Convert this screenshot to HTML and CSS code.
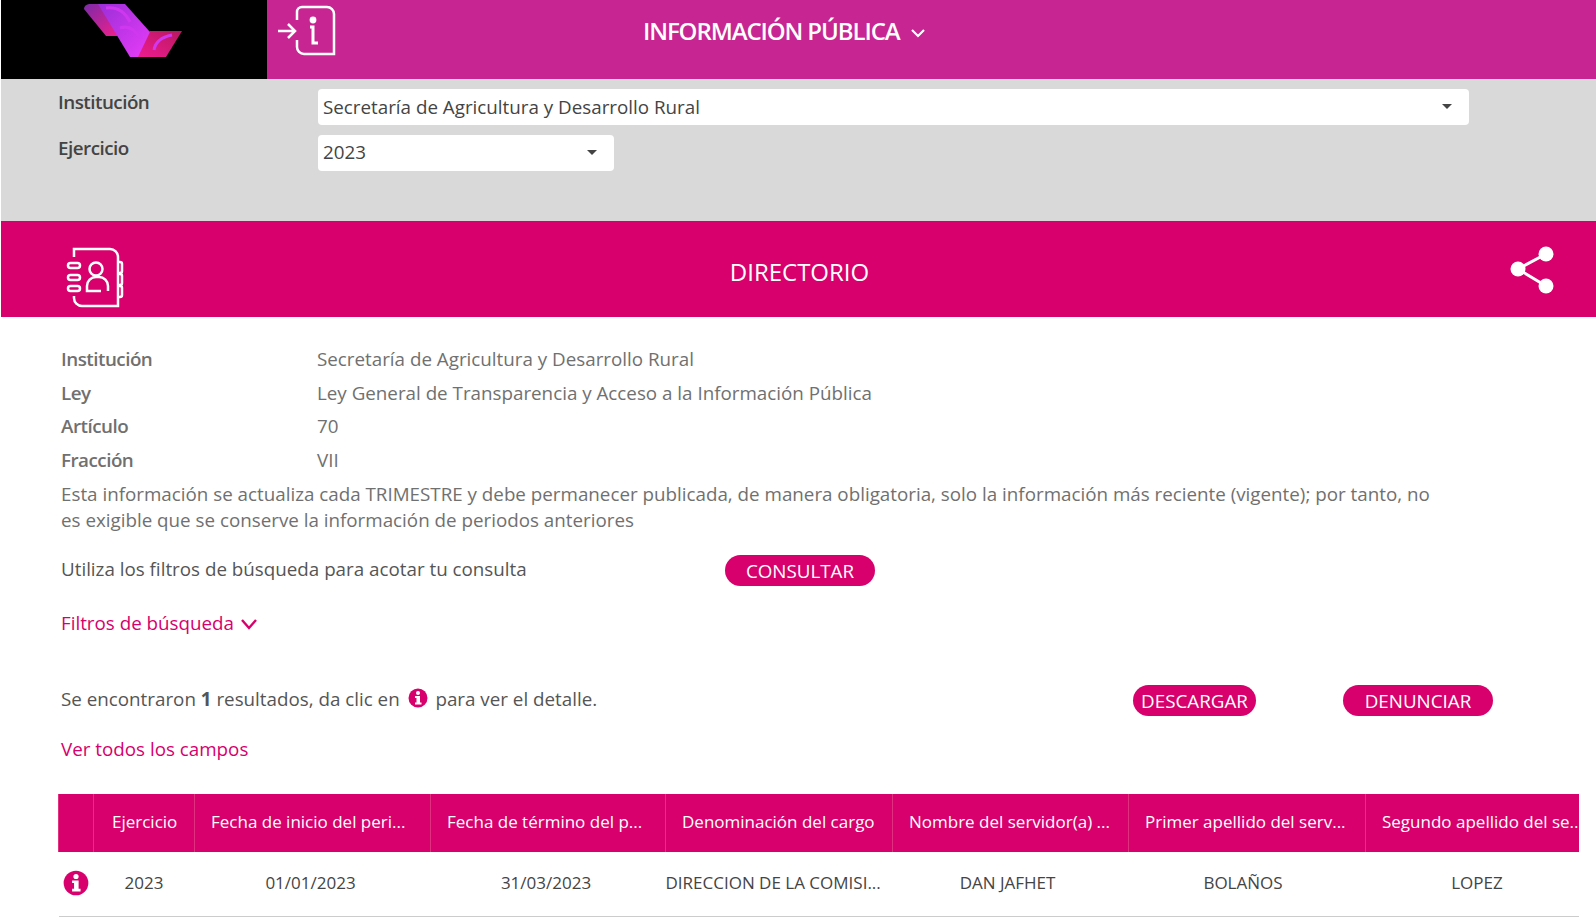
FILE: index.html
```html
<!DOCTYPE html>
<html lang="es">
<head>
  <meta charset="UTF-8" />
  <title>Directorio</title>
  <link rel="stylesheet" href="styles.css">
</head>
<body>
  <!-- Top bar -->
  <header class="top-bar">
    <div class="logo-box">
      <svg width="100" height="60" viewBox="0 0 100 60">
        <defs>
          <linearGradient id="foldGrad" x1="0" y1="0" x2="1" y2="1">
            <stop offset="0" stop-color="#7a2aa8"/>
            <stop offset="1" stop-color="#f0208c"/>
          </linearGradient>
          <linearGradient id="bandGrad" x1="0" y1="0" x2="1" y2="1">
            <stop offset="0" stop-color="#9a2ed8"/>
            <stop offset="1" stop-color="#e83cf8"/>
          </linearGradient>
          <linearGradient id="wingGrad" x1="0" y1="1" x2="1" y2="0">
            <stop offset="0" stop-color="#f01c90"/>
            <stop offset="1" stop-color="#b81860"/>
          </linearGradient>
        </defs>
        <path d="M0 9 Q0 5 5 4 L16 4 L34 36 L22 36 Z" fill="url(#foldGrad)"/>
        <path d="M66 31 L98 31 L82 57 L52 57 Z" fill="url(#wingGrad)"/>
        <path d="M14 4 L41 4 L66 32 L54 57 L46 57 Z" fill="url(#bandGrad)"/>
        <path d="M22 8 Q38 6 46 22 M36 28 Q48 24 56 38 M70 50 Q72 38 88 35" fill="none" stroke="#d038f0" stroke-width="3"/>
      </svg>
    </div>
    <div class="top-main">
      <svg class="info-icon" width="60" height="54" viewBox="0 0 60 54" fill="none" stroke="#fff" stroke-width="2.5">
        <path d="M20 15 V7 a5 5 0 0 1 5-5 H50 a7 7 0 0 1 7 7 V49 H27 a7 7 0 0 1-7-7 V35"/>
        <path d="M1 26 H18 M11 19 L18 26 L11 33"/>
        <circle cx="36" cy="15" r="3.4" fill="#fff" stroke="none"/>
        <path d="M33 22 H36 V38 H41" stroke-width="3"/>
      </svg>
      <div class="top-title">INFORMACIÓN PÚBLICA
        <svg width="16" height="10" viewBox="0 0 16 10" fill="none" stroke="#fff" stroke-width="2.2"><path d="M2 2 L8 8 L14 2"/></svg>
      </div>
    </div>
  </header>

  <!-- Selects -->
  <section class="filters">
    <div class="filter-row">
      <label>Institución</label>
      <div class="select select-wide">Secretaría de Agricultura y Desarrollo Rural<span class="caret"></span></div>
    </div>
    <div class="filter-row">
      <label>Ejercicio</label>
      <div class="select select-small">2023<span class="caret"></span></div>
    </div>
  </section>

  <!-- Section banner -->
  <section class="banner">
    <svg class="dir-icon" width="60" height="62" viewBox="0 0 60 62" fill="none" stroke="#fff" stroke-width="2.5">
      <path d="M8 10 V2 H44 a8 8 0 0 1 8 8 V59 H16 a8 8 0 0 1-8-8 V49"/>
      <path d="M52 15 h2 a2 2 0 0 1 2 2 v7 a2 2 0 0 1-2 2 h-2 M52 27 h2 a2 2 0 0 1 2 2 v7 a2 2 0 0 1-2 2 h-2 M52 39 h2 a2 2 0 0 1 2 2 v7 a2 2 0 0 1-2 2 h-2"/>
      <rect x="2" y="16" width="12" height="5" rx="2.5"/>
      <rect x="2" y="28" width="12" height="5" rx="2.5"/>
      <rect x="2" y="39" width="12" height="5" rx="2.5"/>
      <circle cx="30" cy="22" r="6.5"/>
      <path d="M42 44 V39 a9 9 0 0 0-9-9 h-3 a9 9 0 0 0-9 9 V44 H35"/>
    </svg>
    <h1>DIRECTORIO</h1>
    <svg class="share-icon" width="46" height="52" viewBox="0 0 46 52" fill="#fff">
      <path d="M36 11 L8 26 L36 43" fill="none" stroke="#fff" stroke-width="3"/>
      <circle cx="36" cy="11" r="7.5"/>
      <circle cx="8" cy="26" r="7.5"/>
      <circle cx="36" cy="43" r="7.5"/>
    </svg>
  </section>

  <main class="content">
    <dl class="meta">
      <dt>Institución</dt><dd>Secretaría de Agricultura y Desarrollo Rural</dd>
      <dt>Ley</dt><dd>Ley General de Transparencia y Acceso a la Información Pública</dd>
      <dt>Artículo</dt><dd>70</dd>
      <dt>Fracción</dt><dd>VII</dd>
    </dl>
    <p class="note">Esta información se actualiza cada TRIMESTRE y debe permanecer publicada, de manera obligatoria, solo la información más reciente (vigente); por tanto, no es exigible que se conserve la información de periodos anteriores</p>

    <div class="consult-row">
      <span class="consult-text">Utiliza los filtros de búsqueda para acotar tu consulta</span>
      <button class="pill btn-consultar">CONSULTAR</button>
    </div>

    <div class="link-filtros">Filtros de búsqueda
      <svg width="18" height="12" viewBox="0 0 18 12" fill="none" stroke="#d7006c" stroke-width="2.4"><path d="M2 2 L9 10 L16 2"/></svg>
    </div>

    <div class="result-row">
      <span class="result-text">Se encontraron <b>1</b> resultados, da clic en
        <svg class="i-small" width="20" height="20" viewBox="0 0 20 20"><circle cx="10" cy="10" r="9.5" fill="#d7006c"/><circle cx="10" cy="5" r="2" fill="#fff"/><path d="M7 8 H12 V14.5 H13.5 V16.5 H7 V14.5 H8.5 V10 H7 Z" fill="#fff"/></svg>
        para ver el detalle.</span>
      <button class="pill btn-descargar">DESCARGAR</button>
      <button class="pill btn-denunciar">DENUNCIAR</button>
    </div>

    <div class="link-todos">Ver todos los campos</div>

    <table class="grid">
      <thead>
        <tr>
          <th class="c0"></th>
          <th class="c1">Ejercicio</th>
          <th class="c2">Fecha de inicio del peri...</th>
          <th class="c3">Fecha de término del p...</th>
          <th class="c4">Denominación del cargo</th>
          <th class="c5">Nombre del servidor(a) ...</th>
          <th class="c6">Primer apellido del serv...</th>
          <th class="c7">Segundo apellido del se...</th>
        </tr>
      </thead>
      <tbody>
        <tr>
          <td class="icon-cell"><svg width="26" height="26" viewBox="0 0 20 20"><circle cx="10" cy="10" r="9.5" fill="#d7006c"/><circle cx="10" cy="5" r="2" fill="#fff"/><path d="M7 8 H12 V14.5 H13.5 V16.5 H7 V14.5 H8.5 V10 H7 Z" fill="#fff"/></svg></td>
          <td>2023</td>
          <td class="cell-date">01/01/2023</td>
          <td class="cell-date">31/03/2023</td>
          <td class="cell-cargo">DIRECCION DE LA COMISI...</td>
          <td class="cell-name">DAN JAFHET</td>
          <td class="cell-apellido">BOLAÑOS</td>
          <td class="cell-last">LOPEZ</td>
        </tr>
      </tbody>
    </table>
  </main>
</body>
</html>
```

FILE: styles.css
```css
/* Global */
* { box-sizing: border-box; margin: 0; padding: 0; }
body {
  font-family: 'Open Sans', sans-serif;
  font-size: 18.8px;
  line-height: 27px;
  color: #666;
  background: #fff;
  padding-left: 1px;
  overflow: hidden;
}

/* Top bar */
.top-bar { display: flex; height: 79px; }
.logo-box {
  width: 266px;
  background: #000;
  padding-left: 83px;
  overflow: hidden;
}
.top-main {
  flex: 1;
  background: #c72591;
  position: relative;
}
.info-icon { position: absolute; left: 10px; top: 5px; }
.top-title {
  margin-left: 376px;
  margin-top: 17px;
  font-size: 24px;
  font-weight: 600;
  color: #fff;
  letter-spacing: -1.1px;
}
.top-title svg { margin-left: 5px; vertical-align: 2px; }

/* Select area */
.filters {
  background: #d9d9d9;
  height: 142px;
  padding: 10px 0 0 57px;
}
.filter-row { display: flex; margin-bottom: 10px; }
.filter-row label {
  width: 260px;
  font-weight: 600;
  color: #444;
  letter-spacing: -0.5px;
}
.select {
  background: #fff;
  height: 36px;
  border-radius: 4px;
  padding: 0 5px;
  line-height: 36px;
  color: #444;
  position: relative;
}
.select-wide { width: 1151px; }
.select-small { width: 296px; line-height: 34px; }
.caret {
  position: absolute;
  right: 17px;
  top: 15px;
  border: 5px solid transparent;
  border-top: 5px solid #444;
  border-bottom: 0;
}

/* Banner */
.banner {
  background: #d7006c;
  height: 96px;
  display: flex;
  align-items: center;
  justify-content: center;
  position: relative;
}
.banner h1 {
  font-size: 24px;
  font-weight: 400;
  color: #fff;
  margin: 4px 0 0 2px;
}
.dir-icon { position: absolute; left: 65px; top: 26px; }
.share-icon { position: absolute; right: 40px; top: 22px; }

/* Content */
.content { padding: 26px 17px 0 60px; }
.meta {
  display: grid;
  grid-template-columns: 256px 1fr;
  line-height: 33.6px;
  color: #707070;
}
.meta dt { font-weight: 600; letter-spacing: -0.5px; }
.note { line-height: 26px; width: 1390px; margin-top: 4px; color: #707070; }

.consult-row { display: flex; align-items: center; margin-top: 22px; color: #555; }
.consult-text { width: 664px; padding-bottom: 2px; }
.pill {
  background: #d7006c;
  color: #fff;
  border: 0;
  border-radius: 16px;
  height: 31px;
  font-family: inherit;
  font-size: 18.8px;
}
.btn-consultar { width: 150px; }
.link-filtros { color: #d7006c; margin-top: 24px; }
.link-filtros svg { margin-left: 1px; }

.result-row { display: flex; align-items: center; margin-top: 48px; color: #555; }
.result-text { width: 1072px; padding-bottom: 2px; }
.i-small { vertical-align: -2px; margin: 0 3px; }
.btn-descargar { width: 123px; }
.btn-denunciar { width: 150px; margin-left: 87px; }
.link-todos { color: #d7006c; margin-top: 20px; }

/* Table */
.grid {
  border-collapse: collapse;
  table-layout: fixed;
  width: 1520px;
  margin: 31px 0 0 -3px;
  font-size: 17px;
}
.grid th {
  background: #d7006c;
  color: #fff;
  font-weight: 400;
  height: 58px;
  padding: 0 0 3px 16px;
  text-align: left;
  border-left: 1px solid #e0307f;
  white-space: nowrap;
  overflow: hidden;
}
.grid td {
  height: 64px;
  padding-bottom: 3px;
  text-align: center;
  border-bottom: 1px solid #ccc;
  white-space: nowrap;
  color: #444;
}
.grid .c1 { padding-left: 18px; }
.grid .cell-date { padding-right: 4px; }
.grid .cell-cargo { padding-right: 19px; }
.grid .cell-name { padding-right: 6px; }
.grid .cell-apellido { padding-right: 8px; }
.grid .cell-last { padding-left: 10px; }
.grid .icon-cell { text-align: left; padding-left: 4px; }
.icon-cell svg { display: block; }
.c0 { width: 35px; }
.c1 { width: 101px; }
.c2 { width: 236px; }
.c3 { width: 235px; }
.c4 { width: 227px; }
.c5 { width: 236px; }
.c6 { width: 237px; }
.c7 { width: 213px; }
```
